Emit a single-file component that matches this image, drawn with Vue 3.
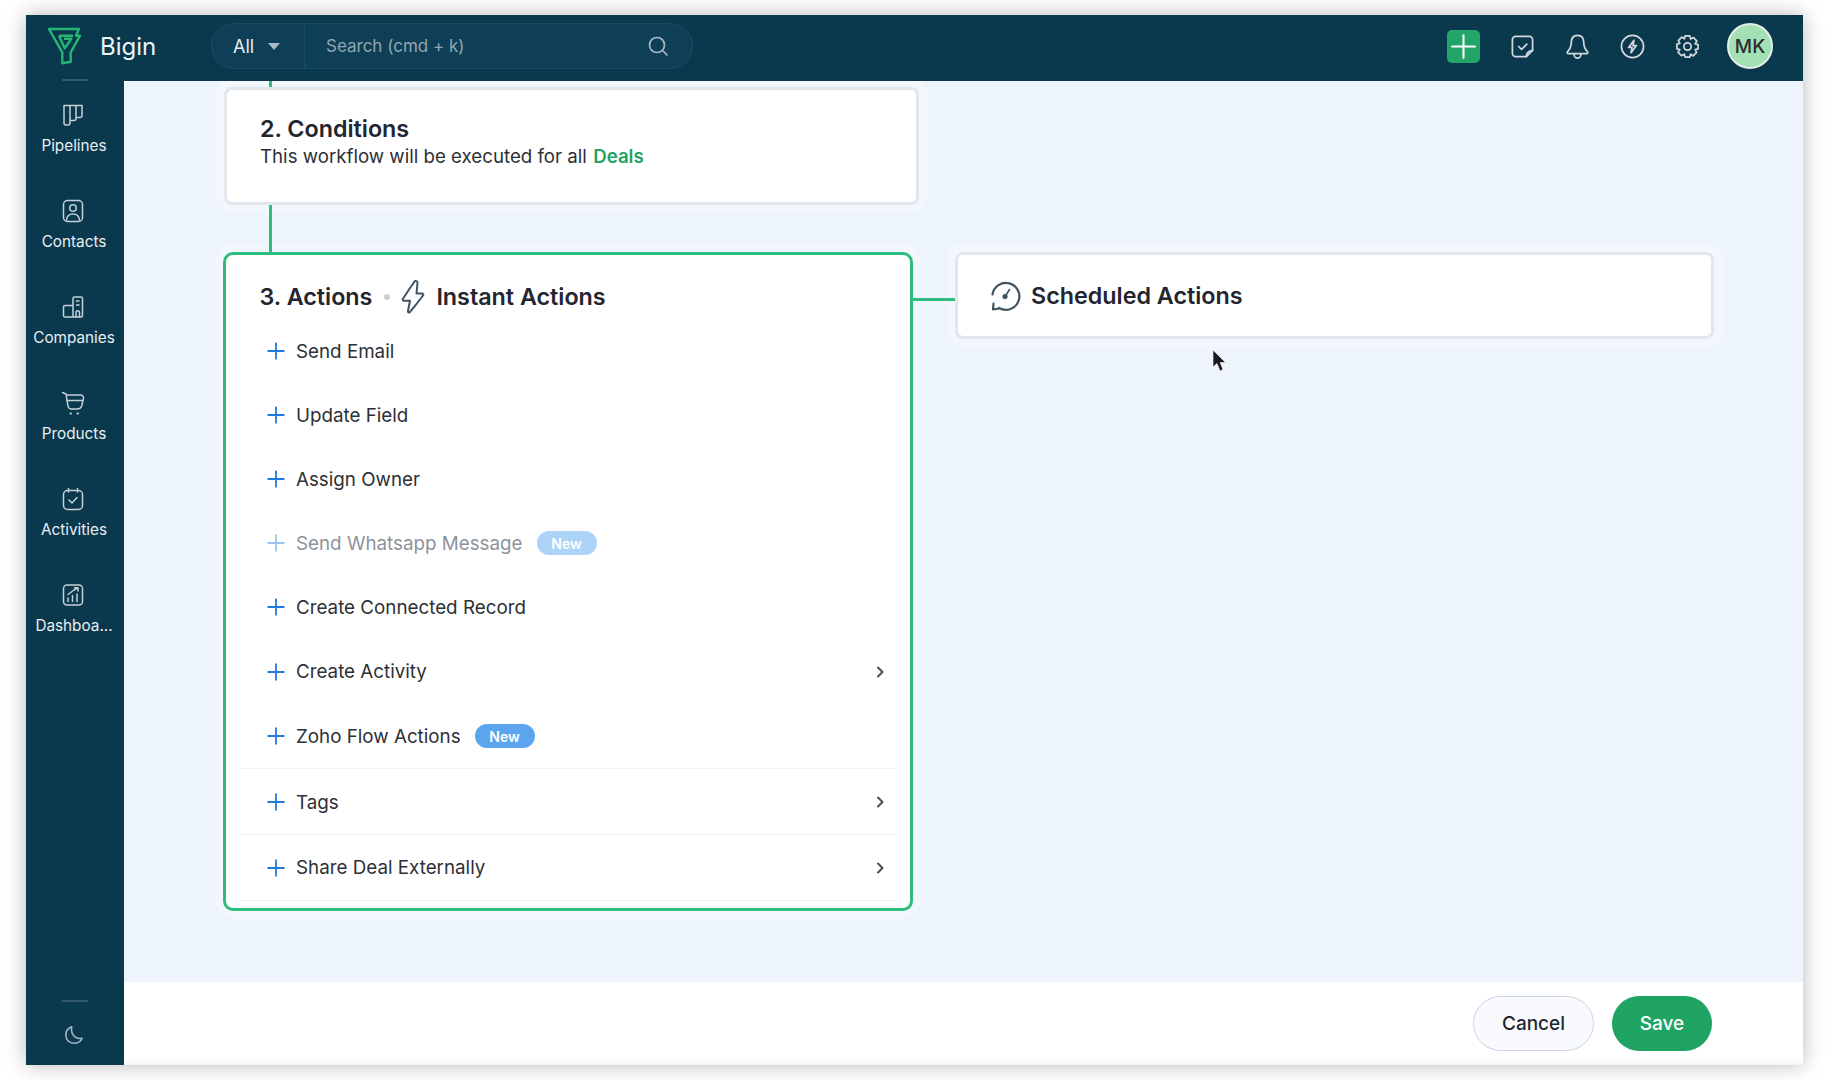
<script setup>
const nav = [
  { label: 'Pipelines', icon: 'pipe' },
  { label: 'Contacts', icon: 'contact' },
  { label: 'Companies', icon: 'company' },
  { label: 'Products', icon: 'cart' },
  { label: 'Activities', icon: 'activity' },
  { label: 'Dashboa...', icon: 'dash' },
]
const rows = [
  { label: 'Send Email' },
  { label: 'Update Field' },
  { label: 'Assign Owner' },
  { label: 'Send Whatsapp Message', badge: true, muted: true },
  { label: 'Create Connected Record' },
  { label: 'Create Activity', chevron: true },
  { label: 'Zoho Flow Actions', badge: true, line: true },
  { label: 'Tags', chevron: true, line: true },
  { label: 'Share Deal Externally', chevron: true, line: true },
]
</script>

<template>
  <div class="page">
    <div class="window">
      <header class="topbar">
        <svg class="logo" viewBox="0 0 34 38" fill="none" stroke="#25b574" stroke-width="2.400" stroke-linejoin="round">
          <path d="M1 2H31L28 8.700H32L22.700 25.300V34.700L14.300 36.300V25.300Z" />
          <path d="M11 8.700H25M11 8.700L16.700 21.300L23.300 11.800H16" />
        </svg>
        <span class="brand">Bigin</span>
        <div class="search">
          <div class="scope"><span>All</span><i class="caret"></i></div>
          <span class="placeholder">Search (cmd + k)</span>
          <svg class="search-icon" viewBox="0 0 22 22" fill="none" stroke="#a9bac3" stroke-width="1.700" stroke-linecap="round">
            <circle cx="10" cy="10" r="7.500" /><path d="M15.500 15.500 L20 20" />
          </svg>
        </div>
        <div class="tools">
          <button class="add"><svg viewBox="0 0 32 32" stroke="#fff" stroke-width="2" stroke-linecap="round"><path d="M16 5V27M5 16H27" /></svg></button>
          <svg class="tool" viewBox="0 0 26 26" fill="none" stroke="#cfd8dd" stroke-width="1.800" stroke-linecap="round" stroke-linejoin="round">
            <path d="M6 2.500H20A3.500 3.500 0 0 1 23.500 6V17L17 23.500H6A3.500 3.500 0 0 1 2.500 20V6A3.500 3.500 0 0 1 6 2.500Z" /><path d="M9 13L12 16L17.500 10.500" /><path d="M17 23.500C17 19.500 19 17.500 23.500 17" />
          </svg>
          <svg class="tool" viewBox="0 0 26 26" fill="none" stroke="#cfd8dd" stroke-width="1.800" stroke-linecap="round" stroke-linejoin="round">
            <path d="M13 1.500C8.500 1.500 6.500 5 6.500 9C6.500 14 5 16 2.500 18.500C2 19.500 2.500 20.500 3.500 20.500H22.500C23.500 20.500 24 19.500 23.500 18.500C21 16 19.500 14 19.500 9C19.500 5 17.500 1.500 13 1.500Z" /><path d="M9.500 21V21.500A3.500 3.500 0 0 0 16.500 21.500V21" />
          </svg>
          <svg class="tool" viewBox="0 0 26 26" fill="none" stroke="#cfd8dd" stroke-width="1.800" stroke-linejoin="round">
            <circle cx="13" cy="13" r="11.500" /><path d="M14.500 6.500L9 14H12.500L11.500 19.500L17 12H13.500Z" />
          </svg>
          <svg class="tool" viewBox="0 0 26 26" fill="none" stroke="#cfd8dd" stroke-width="1.800" stroke-linejoin="round">
            <path d="M10.500 2H15.500L16.300 5.200L19.200 3.700L22.800 7.300L21 10.200L24 11V15.500L21 16.300L22.500 19.200L19 22.800L16.200 21L15.500 24H10.500L9.700 21L6.800 22.500L3.200 19L5 16.200L2 15.500V10.500L5 9.700L3.500 6.800L7 3.200L9.800 5Z" /><circle cx="13" cy="13" r="3.800" />
          </svg>
          <div class="avatar">MK</div>
        </div>
      </header>

      <div class="body">
        <aside class="sidebar">
          <div class="rule top-rule"></div>
          <nav class="nav">
            <div v-for="item in nav" :key="item.label" class="nav-item">
              <svg viewBox="0 0 24 24" fill="none" stroke="#c3d0d6" stroke-width="1.500" stroke-linecap="round" stroke-linejoin="round">
                <template v-if="item.icon === 'pipe'">
                  <path d="M3 2.500H21V12.500A2 2 0 0 1 19 14.500H15V2.500M9 2.500V20A2 2 0 0 1 7 22H5A2 2 0 0 1 3 20V2.500M9 17.500H13A2 2 0 0 0 15 15.500V14.500" />
                </template>
                <template v-else-if="item.icon === 'contact'">
                  <rect x="2.500" y="1.500" width="19" height="21" rx="4" /><circle cx="12" cy="9" r="3.300" /><path d="M5.500 21C6 16.500 9 15 12 15C15 15 18 16.500 18.500 21" />
                </template>
                <template v-else-if="item.icon === 'company'">
                  <path d="M12 22V3.500A1.500 1.500 0 0 1 13.500 2H20A1.500 1.500 0 0 1 21.500 3.500V20.500A1.500 1.500 0 0 1 20 22H4A1.500 1.500 0 0 1 2.500 20.500V12A1.500 1.500 0 0 1 4 10.500H12" /><path d="M15.500 6H18M15.500 10H18M15 22V17.500A1.500 1.500 0 0 1 18.500 17.500V22" />
                </template>
                <template v-else-if="item.icon === 'cart'">
                  <path d="M1.500 1.500L5 3L7 15C7.300 17 8.500 18 10.500 18H16C18.500 18 20 17 20.700 15L22.500 7.500C22.800 5.500 21.500 4 19.500 4H5" /><path d="M6 9.500H21.500" /><path d="M9.500 22.500H10M16.500 22.500H17" stroke-width="2" />
                </template>
                <template v-else-if="item.icon === 'activity'">
                  <rect x="2.500" y="3.500" width="19" height="19" rx="4" /><path d="M7.500 1.500V5M16.500 1.500V5M8 13L11 16L16 10.500" />
                </template>
                <template v-else>
                  <rect x="2.500" y="2" width="19" height="20" rx="3.500" /><path d="M7 18.500V15M11.500 18.500V12.500M16 18.500V11M7 11.500L13 7L16.500 5M13.500 4.800L17 4.800L17 8" />
                </template>
              </svg>
              <span>{{ item.label }}</span>
            </div>
          </nav>
          <div class="rule bottom-rule"></div>
          <svg class="moon" viewBox="0 0 22 22" fill="none" stroke="#a7b8c0" stroke-width="1.700" stroke-linejoin="round">
            <path d="M8.500 2C4.500 3.500 2 6.500 2 11C2 16.500 6 20 11 20C15 20 18.500 18 20 14.500C14 16 7 12 8.500 2Z" />
          </svg>
        </aside>

        <div class="content">
          <main class="canvas">
            <div class="stub"></div>
            <section class="card conditions">
              <h2>2. Conditions</h2>
              <p>This workflow will be executed for all <b>Deals</b></p>
            </section>
            <div class="link"></div>
            <div class="actions-row">
              <section class="actions">
                <div class="actions-head">
                  <h2>3. Actions</h2>
                  <i class="dot"></i>
                  <svg class="bolt" viewBox="0 0 24 34" fill="none" stroke="#3f5360" stroke-width="2" stroke-linejoin="round">
                    <path d="M13.500 1.500C9 8 5 14 1.800 19C1.300 20 2 20.800 3 20.800H9L7 31C6.800 32.500 8 33 9 32C13 27 18 21 22 15.500C22.700 14.500 22 13.500 21 13.500H15.500L16.500 3C16.700 1.500 14.500 0.300 13.500 1.500Z" />
                  </svg>
                  <h2>Instant Actions</h2>
                </div>
                <div v-for="row in rows" :key="row.label" class="row" :class="{ muted: row.muted, line: row.line }">
                  <svg class="plus" viewBox="0 0 18 18" stroke="#1f7ae0" stroke-width="1.800"><path d="M9 0.500V17.500M0.500 9H17.500" /></svg>
                  <span>{{ row.label }}</span>
                  <em v-if="row.badge" class="badge">New</em>
                  <svg v-if="row.chevron" class="chevron" viewBox="0 0 8 12" fill="none" stroke="#444f57" stroke-width="2" stroke-linecap="round" stroke-linejoin="round"><path d="M2 1.500L6.500 6L2 10.500" /></svg>
                </div>
              </section>
              <div class="side-link"></div>
              <section class="card scheduled">
                <svg viewBox="0 0 32 32" fill="none" stroke="#3f5360" stroke-width="2.200" stroke-linecap="round" stroke-linejoin="round">
                  <path d="M2.500 14.500A13.500 13.500 0 1 1 9 28" /><path d="M3.500 23.500L3 29.500L9 28.500" /><circle cx="15" cy="16.500" r="2.600" fill="#3f5360" stroke="none" /><path d="M15.500 16L19.500 9.500" stroke-width="1.600" />
                </svg>
                <h2>Scheduled Actions</h2>
              </section>
            </div>
            <svg class="cursor" viewBox="0 0 14 24"><path d="M1 1V18L5 14.500L8 22L11 20.500L8.200 13.500H13.500Z" fill="#1a1a1f" stroke="#fff" stroke-width="0.600" /></svg>
          </main>
          <footer class="footer">
            <button class="btn cancel">Cancel</button>
            <button class="btn save">Save</button>
          </footer>
        </div>
      </div>
    </div>
  </div>
</template>

<style>
html, body { margin: 0; background: #fff; }
</style>

<style scoped>
* { box-sizing: border-box; }
.page {
  width: 1828px; height: 1080px; padding: 15px 25px 15px 26px;
  font-family: Inter, "Noto Sans", sans-serif; color: #23262f; overflow: hidden; background: #fff;
}
.window {
  height: 100%; display: flex; flex-direction: column; overflow: hidden;
  box-shadow: 0 0 20px rgba(0, 0, 0, .28);
}
.topbar {
  height: 66px; flex: none; background: #0a384d; display: flex; align-items: center;
  padding: 0 0 4px 22px; color: #fff;
}
.logo { width: 34px; height: 38px; flex: none; }
.brand { margin-left: 18px; font-size: 24px; width: 111px; flex: none; color: #eef3f5; }
.search {
  width: 482px; height: 46px; border-radius: 23px; background: #0e3f57; border: 1px solid #164d66;
  display: flex; align-items: center;
}
.scope {
  width: 93px; height: 100%; border-right: 1px solid #164d66; display: flex; align-items: center;
  padding-left: 21px; font-size: 18px; color: #e6edf0;
}
.caret {
  margin-left: 14px; margin-top: 1px; border: 6px solid transparent; border-top: 7px solid #a9bac3; border-bottom: 0;
}
.placeholder { margin-left: 21px; font-size: 17px; color: #92a6b1; flex: 1; }
.search-icon { width: 22px; height: 22px; margin-right: 23px; }
.tools { margin-left: auto; display: flex; align-items: center; padding-right: 30px; }
.add {
  width: 33px; height: 33px; border: 0; padding: 0; border-radius: 5px; background: #22a566; margin-right: 30px; display: block;
}
.add svg { width: 33px; height: 33px; display: block; }
.tool { width: 25px; height: 25px; margin-right: 30px; flex: none; }
.avatar {
  width: 46px; height: 46px; border-radius: 50%; background: #a3e0b3; border: 2px solid #e4efe9;
  color: #2a2d33; font-size: 19px; font-weight: 500; display: flex; align-items: center; justify-content: center; margin-left: -3px;
}
.body { flex: 1; display: flex; min-height: 0; }
.sidebar {
  width: 98px; flex: none; background: #0a384d; display: flex; flex-direction: column; align-items: center; color: #e9eff2;
}
.rule { height: 2px; width: 26px; background: #33596b; flex: none; margin-top: -2px; }
.nav { flex: 1; display: flex; flex-direction: column; padding-top: 21.500px; }
.nav-item {
  height: 96px; width: 98px; display: flex; flex-direction: column; align-items: center; flex: none;
}
.nav-item svg { width: 24px; height: 24px; margin-left: -5px; }
.nav-item span { margin-top: 9px; margin-left: -2px; font-size: 15.300px; line-height: 20px; }
.moon { width: 20px; height: 20px; margin: 23px 2px 20px 0; flex: none; }
.content { flex: 1; display: flex; flex-direction: column; min-width: 0; }
.canvas {
  position: relative; flex: 1; min-height: 0; background: #edf4fc; padding-left: 99px; border-top-left-radius: 6px; overflow: hidden;
}
.stub { width: 2.500px; height: 6px; background: #2dbd7d; margin-left: 46px; position: relative; z-index: 1; }
.card {
  background: #fff; border: 3px solid #e0e8ee; border-radius: 8px; box-shadow: 0 0 0 8px #f1f7fd;
}
.conditions { width: 695px; height: 118px; margin-left: 1px; padding: 24px 33px; position: relative; }
.conditions h2, .actions h2, .scheduled h2 { margin: 0; font-size: 23.300px; font-weight: 600; line-height: 30px; color: #23262f; }
.conditions p { margin: 0; font-size: 18.700px; line-height: 25px; color: #2d3036; }
.conditions b { margin-left: 1px; font-weight: 600; color: #1fa463; }
.link { width: 2.500px; height: 47px; background: #2dbd7d; margin-left: 46px; position: relative; z-index: 1; }
.actions-row { display: flex; align-items: flex-start; }
.actions {
  width: 690px; height: 659px; background: #fff; border: 3px solid #2dbd7d; border-radius: 10px; padding: 23px 14px 0;
  box-shadow: 0 0 0 8px #f1f7fd; flex: none; position: relative;
}
.actions-head { display: flex; align-items: center; height: 38px; padding-left: 19.500px; margin-bottom: 3px; }
.dot { width: 6px; height: 6px; border-radius: 50%; background: #c9d1da; margin: 0 11px 0 12px; }
.bolt { width: 24px; height: 34px; margin-right: 11px; }
.row {
  height: 64.100px; display: flex; align-items: center; padding: 0 12px 0 27px; font-size: 18.800px; color: #2d3036;
  position: relative;
}
.row.line { height: 65.700px; }
.row.line::after {
  content: ""; position: absolute; left: 0; right: 0; bottom: 0; height: 1px; background: #eef0f4;
}
.plus { width: 18px; height: 18px; flex: none; margin-right: 11px; }
.muted { color: #8d939b; }
.muted .plus { opacity: .45; }
.muted .badge { background: #aed3f8; }
.badge {
  font-style: normal; background: #5aa5ee; color: #fff; font-size: 14px; font-weight: 600; height: 24px; border-radius: 12px; width: 60px;
  display: flex; align-items: center; justify-content: center; margin-left: 14px;
}
.chevron { width: 8px; height: 12px; margin-left: auto; }
.side-link { width: 42px; height: 3px; background: #2dbd7d; margin-top: 46px; flex: none; position: relative; z-index: 1; }
.scheduled {
  width: 759px; height: 87px; display: flex; align-items: center; padding-left: 32px; flex: none; position: relative;
}
.scheduled svg { width: 32px; height: 32px; margin-right: 9px; }
.cursor { position: absolute; left: 1088px; top: 268px; width: 14px; height: 24px; }
.footer {
  height: 83px; flex: none; background: linear-gradient(#fff 90%, #f6f6f6); display: flex; justify-content: flex-end; align-items: flex-start; padding: 14px 91px 0 0; gap: 18px;
}
.btn { height: 55px; border-radius: 28px; font: 500 19px Inter, sans-serif; }
.cancel { width: 121px; background: #f8fafd; border: 1px solid #c9d5e3; color: #23262f; }
.save { width: 100px; background: #1fa463; border: 0; color: #fff; }
</style>
